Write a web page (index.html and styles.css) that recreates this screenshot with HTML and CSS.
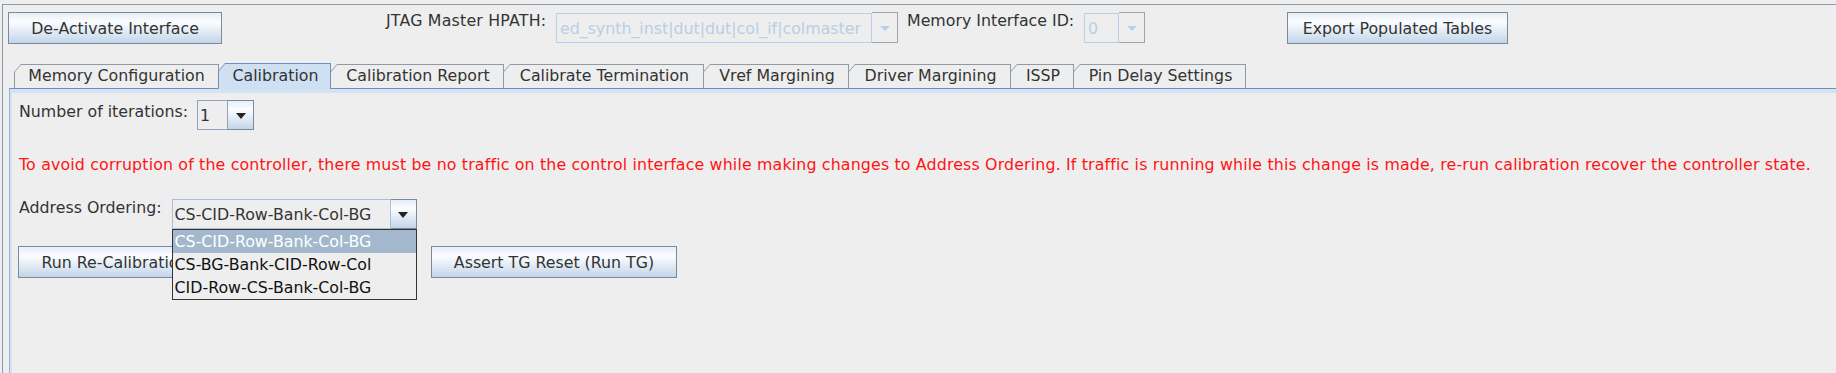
FILE: index.html
```html
<!DOCTYPE html>
<html lang="en">
  <head>
    <meta charset="UTF-8" />
    <title>Calibration</title>
    <link rel="stylesheet" href="styles.css">
  </head>
  <body>
    <div class="frame">
      <div class="toolbar">
        <button class="btn btn-deactivate">De-Activate Interface</button>
        <span class="label label-jtag">JTAG Master HPATH:</span>
        <div class="combo combo-disabled combo-jtag">
          <div class="combo-field">ed_synth_inst|dut|dut|col_if|colmaster</div>
          <div class="combo-arrow"><span class="tri"></span></div>
        </div>
        <span class="label label-mif">Memory Interface ID:</span>
        <div class="combo combo-disabled combo-mif">
          <div class="combo-field">0</div>
          <div class="combo-arrow"><span class="tri"></span></div>
        </div>
        <button class="btn btn-export">Export Populated Tables</button>
      </div>

      <div class="tabs">
        <div class="tab tab-memcfg">Memory Configuration</div>
        <div class="tab tab-cal selected">Calibration</div>
        <div class="tab tab-report">Calibration Report</div>
        <div class="tab tab-term">Calibrate Termination</div>
        <div class="tab tab-vref">Vref Margining</div>
        <div class="tab tab-driver">Driver Margining</div>
        <div class="tab tab-issp">ISSP</div>
        <div class="tab tab-pin">Pin Delay Settings</div>
      </div>

      <div class="panel">
        <div class="panel-inner">
          <div class="row row-iter">
            <span class="label">Number of iterations:</span>
            <div class="combo combo-iter">
              <div class="combo-field">1</div>
              <div class="combo-arrow"><span class="tri"></span></div>
            </div>
          </div>

          <p class="warning">To avoid corruption of the controller, there must be no traffic on the control interface while making changes to Address Ordering. If traffic is running while this change is made, re-run calibration recover the controller state.</p>

          <div class="row row-order">
            <span class="label">Address Ordering:</span>
            <div class="combo combo-order">
              <div class="combo-field">CS-CID-Row-Bank-Col-BG</div>
              <div class="combo-arrow"><span class="tri"></span></div>
              <ul class="popup">
                <li class="active">CS-CID-Row-Bank-Col-BG</li>
                <li>CS-BG-Bank-CID-Row-Col</li>
                <li>CID-Row-CS-Bank-Col-BG</li>
              </ul>
            </div>
          </div>

          <div class="row row-buttons">
            <button class="btn btn-recal">Run Re-Calibration</button>
            <button class="btn btn-tg">Assert TG Reset (Run TG)</button>
          </div>
        </div>
      </div>
    </div>
  </body>
</html>
```

FILE: styles.css
```css
html,
body {
  margin: 0;
  height: 373px;
  overflow: hidden;
}
body {
  background: #eeeeee;
  font-family: "DejaVu Sans", "Liberation Sans", sans-serif;
  font-size: 15.8px;
  color: #333333;
}
.frame {
  margin: 4px 0 0 2px;
  border-top: 1px solid #8c99a8;
  border-left: 1px solid #8c99a8;
  height: 368px;
}

/* top bar */
.toolbar {
  display: flex;
  align-items: flex-start;
  padding: 7px 0 0 5px;
  height: 32px;
}
.btn {
  height: 32px;
  box-sizing: border-box;
  padding: 0;
  border: 1px solid #7a8a99;
  background: linear-gradient(#e6eef7, #fbfdff 30%, #c3d5e9);
  font: inherit;
  color: #333333;
  text-align: center;
  white-space: nowrap;
}
.btn-deactivate {
  width: 214px;
}
.btn-export {
  margin-left: 142px;
  width: 221px;
}
.label {
  line-height: 18px;
  white-space: nowrap;
}
.label-jtag {
  margin-left: 164px;
  width: 162px;
  letter-spacing: 0.2px;
}
.label-mif {
  margin-left: 9px;
  width: 168px;
}

/* combo boxes */
.combo {
  position: relative;
  display: flex;
  height: 31px;
  box-sizing: border-box;
}
.combo-field {
  flex: 1;
  box-sizing: border-box;
  padding-left: 3px;
  border: 1px solid #8fa3bf;
  background: #eeeeee;
  line-height: 29px;
  white-space: nowrap;
  overflow: hidden;
}
.combo-arrow {
  width: 26px;
  flex: none;
  box-sizing: border-box;
  display: flex;
  align-items: center;
  justify-content: center;
  border: 1px solid #7a8a99;
  border-left: none;
  background: linear-gradient(#e6eef7, #fbfdff 30%, #c3d5e9);
}
.tri {
  width: 0;
  height: 0;
  border-left: 5px solid transparent;
  border-right: 5px solid transparent;
  border-top: 6px solid #222222;
  margin-top: 2px;
}
.combo-disabled .combo-field {
  margin-top: 1px;
  border-color: #b8cfe5;
  color: #b8cfe5;
}
.combo-disabled .combo-arrow {
  border-color: #a3a3a3;
  background: #eeeeee;
}
.combo-disabled .tri {
  border-top-color: #b8cfe5;
  border-top-width: 5px;
}
.combo-jtag {
  margin-left: 8px;
  width: 342px;
}
.combo-mif {
  margin-left: 9px;
  width: 61px;
}

/* tabs */
.tabs {
  display: flex;
  align-items: flex-end;
  margin: 19px 0 0 11px;
  height: 25px;
}
.tab {
  position: relative;
  isolation: isolate;
  box-sizing: border-box;
  height: 24px;
  margin-right: -1px;
  padding-left: 2px;
  line-height: 24px;
  text-align: center;
  background: #8f9aa8;
  clip-path: polygon(0 8px, 7px 0, 100% 0, 100% 100%, 0 100%);
  white-space: nowrap;
}
.tab::before {
  content: "";
  position: absolute;
  top: 1px;
  left: 1px;
  right: 1px;
  bottom: 0;
  z-index: -1;
  background: #eeeeee;
  clip-path: polygon(0 7px, 6px 0, 100% 0, 100% 100%, 0 100%);
}
.tab.selected {
  height: 26px;
  margin-bottom: -1px;
  line-height: 25px;
  background: #6f8fc4;
  z-index: 2;
}
.tab.selected::before {
  background: #cfe0f2;
}
.tab-memcfg { width: 205px; padding-left: 0; }
.tab-cal { width: 113px; }
.tab-report { width: 174px; }
.tab-term { width: 201px; }
.tab-vref { width: 146px; }
.tab-driver { width: 163px; }
.tab-issp { width: 64px; }
.tab-pin { width: 173px; }

/* tab content */
.panel {
  position: relative;
  margin-left: 6px;
  border-top: 1px solid #6f8dc0;
  border-left: 1px solid #97b0d3;
  height: 284px;
}
.panel-inner {
  box-sizing: border-box;
  border-top: 4px solid #d4e3f3;
  border-left: 2px solid #d4e3f3;
  padding: 7px 0 0 7px;
  height: 100%;
}
.row {
  display: flex;
  align-items: center;
}
.row .label {
  align-self: flex-start;
  padding-top: 3px;
}
.combo-iter {
  margin-left: 9px;
  width: 57px;
  height: 30px;
}
.combo-iter .combo-field {
  padding-left: 2px;
}
.warning {
  margin: 25px 0 0;
  line-height: 20px;
  color: #ff1414;
  letter-spacing: 0.16px;
  white-space: nowrap;
}
.row-order {
  margin-top: 24px;
}
.row-order .label {
  padding-top: 0;
}
.combo-order {
  margin-left: 10px;
  width: 245px;
  height: 30px;
}
.combo-order .combo-field {
  padding-left: 2px;
  border-color: #a9bfd8;
}
.popup {
  position: absolute;
  top: 100%;
  left: 0;
  width: 245px;
  box-sizing: border-box;
  margin: 0;
  padding: 0;
  list-style: none;
  border: 1px solid #333333;
  background: #eeeeee;
  color: #111111;
  z-index: 5;
}
.popup li {
  height: 23px;
  line-height: 23px;
  padding-left: 2px;
  white-space: nowrap;
}
.popup li.active {
  background: #a3b8cc;
  color: #ffffff;
}
.row-buttons {
  margin: 17px 0 0 -1px;
}
.btn-recal {
  width: 194px;
  overflow: hidden;
}
.btn-tg {
  margin-left: 219px;
  width: 246px;
}
```
